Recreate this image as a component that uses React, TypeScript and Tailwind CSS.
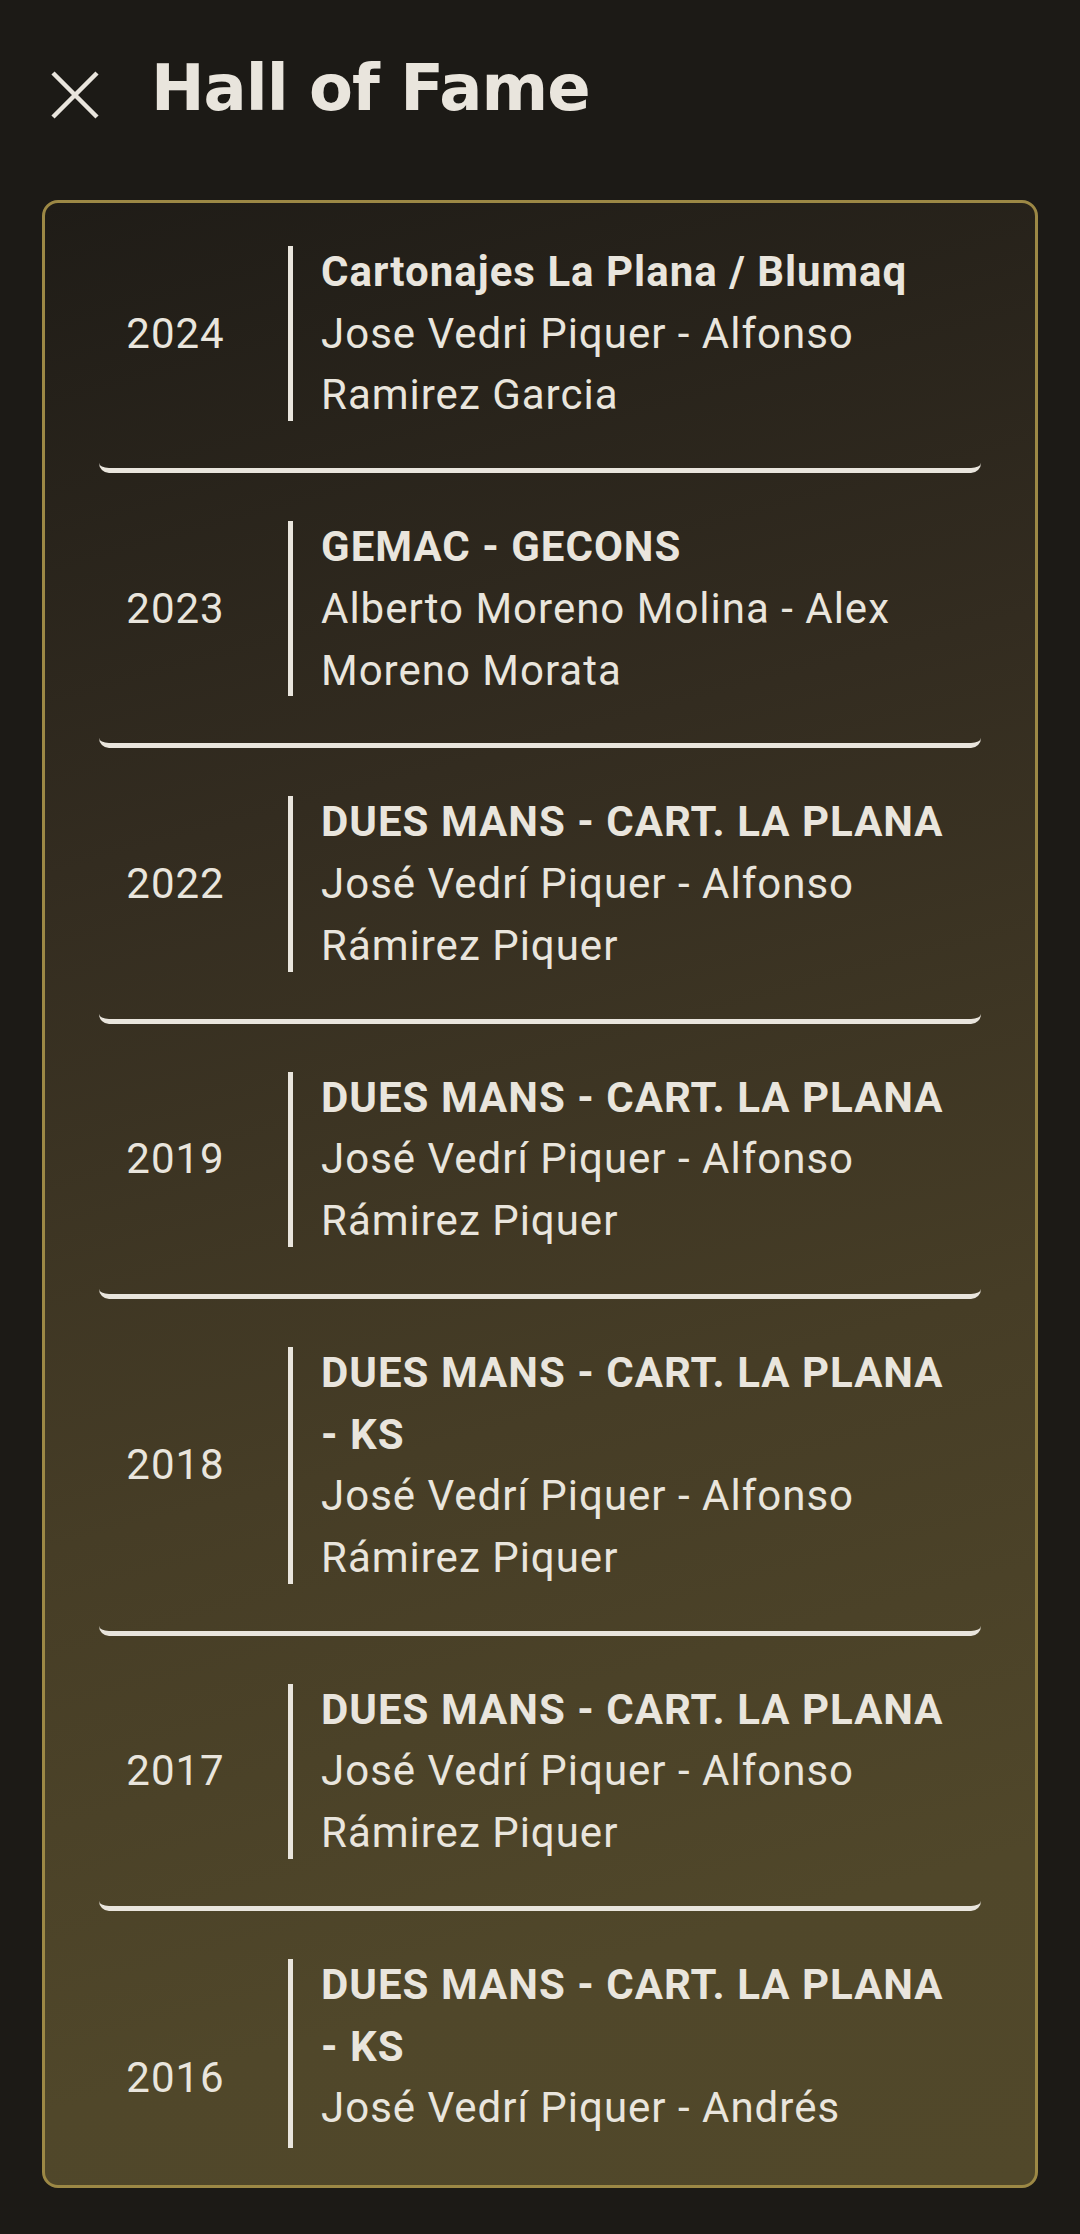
import React from "react";

type Entry = {
  year: string;
  team: string;
  names: string;
};

const entries: Entry[] = [
  { year: "2024", team: "Cartonajes La Plana / Blumaq", names: "Jose Vedri Piquer - Alfonso Ramirez Garcia" },
  { year: "2023", team: "GEMAC - GECONS", names: "Alberto Moreno Molina - Alex Moreno Morata" },
  { year: "2022", team: "DUES MANS - CART. LA PLANA", names: "José Vedrí Piquer - Alfonso Rámirez Piquer" },
  { year: "2019", team: "DUES MANS - CART. LA PLANA", names: "José Vedrí Piquer - Alfonso Rámirez Piquer" },
  { year: "2018", team: "DUES MANS - CART. LA PLANA - KS", names: "José Vedrí Piquer - Alfonso Rámirez Piquer" },
  { year: "2017", team: "DUES MANS - CART. LA PLANA", names: "José Vedrí Piquer - Alfonso Rámirez Piquer" },
  { year: "2016", team: "DUES MANS - CART. LA PLANA - KS", names: "José Vedrí Piquer - Andrés" },
];

function CloseIcon() {
  return (
    <svg width="48" height="48" viewBox="0 0 48 48" fill="none" aria-hidden>
      <path d="M2 2L46 46M46 2L2 46" stroke="currentColor" strokeWidth="4.5" />
    </svg>
  );
}

// the list is cut off at a fixed height, so the last row keeps going below the edge
function Row({ entry, last }: { entry: Entry; last: boolean }) {
  return (
    <div
      className={
        last
          ? "flex items-center pt-[43px] pb-[42px]"
          : "flex items-center pt-[43px] pb-[42px] border-b-[5px] border-[#e9e5dd] rounded-[10px]"
      }
    >
      <div className="w-[153px] shrink-0 text-center">{entry.year}</div>
      <div className="ml-[36px] flex self-stretch">
        <span className="my-[5px] w-[5px] bg-[#e9e5dd]" />
      </div>
      <div className={last ? "pl-[28px] pr-[20px] pb-[62px] flex-1 min-w-0" : "pl-[28px] pr-[20px] flex-1 min-w-0"}>
        <div className="font-bold">{entry.team}</div>
        <div>{entry.names}</div>
      </div>
    </div>
  );
}

export default function App() {
  return (
    <div className="min-h-screen bg-[#1c1a16] text-[#e9e5dd] font-['Roboto',sans-serif]">
      <header className="flex items-start pl-[51px] pt-[50px] h-[200px]">
        <span className="mt-[21px]">
          <CloseIcon />
        </span>
        <h1 className="ml-[52px] mt-[6px] font-['DejaVu_Sans',sans-serif] font-bold text-[64px] leading-none tracking-[-0.015em]">
          Hall of Fame
        </h1>
      </header>

      <div className="mx-[42px] rounded-[16px] border-[3px] border-[#9c8845] bg-[linear-gradient(165deg,#1f1c17_0%,#332c20_30%,#463d26_60%,#50472a_85%,#51482a_100%)] px-[54px] pb-[37px]">
        <div className="h-[1950px] overflow-hidden -mt-[5px] text-[42px] leading-[1.47] tracking-[1px]">
          {entries.map((e, i) => (
            <Row key={e.year} entry={e} last={i === entries.length - 1} />
          ))}
        </div>
      </div>
    </div>
  );
}
